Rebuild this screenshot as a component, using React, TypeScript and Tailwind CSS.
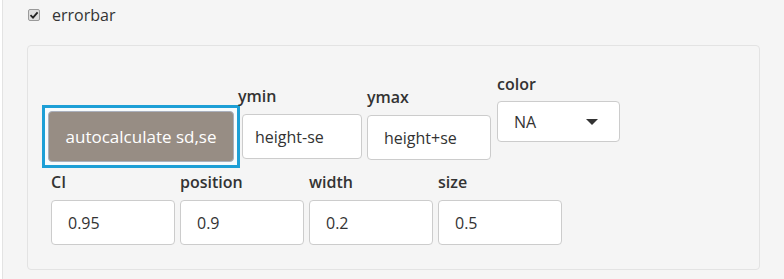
import React from "react";

const font = { fontFamily: '"Open Sans", "Noto Sans", sans-serif' };

const Field: React.FC<{
  label: string;
  value: string;
  width: string;
  pad?: string;
  labelShift?: string;
}> = ({ label, value, width, pad = "pl-4", labelShift = "" }) => (
  <div className="flex flex-col">
    <label
      className={`h-5 text-[16px] leading-5 font-semibold text-[#333] ${labelShift}`}
    >
      {label}
    </label>
    <div
      className={`mt-[8px] h-[45px] ${width} ${pad} flex items-center rounded-[4px] border border-[#cccccc] bg-white text-[16px] text-[#333]`}
    >
      {value}
    </div>
  </div>
);

export default function App() {
  return (
    <div className="h-[279px] w-[784px] overflow-hidden bg-white" style={font}>
      <div className="ml-[2px] h-full border-l border-[#e3e3e3] bg-[#f5f5f5]">
        {/* checkbox row */}
        <div className="flex h-[30px] items-center pl-[25px]">
          <span className="flex h-[12px] w-[12px] items-center justify-center rounded-[2px] border border-[#9a9a9a] bg-[#dedede]">
            <svg width="10" height="10" viewBox="0 0 10 10">
              <path
                d="M1.5 5.2 L4 7.6 L8.6 2.4"
                stroke="#222"
                strokeWidth="1.8"
                fill="none"
              />
            </svg>
          </span>
          <span className="ml-[12px] text-[16px] leading-5 text-[#333]">
            errorbar
          </span>
        </div>

        {/* inner well */}
        <div className="ml-[24px] mt-[15px] h-[225px] w-[733px] rounded-[4px] border border-[#e3e3e3] bg-[#f5f5f5]">
          <div className="flex items-start pl-[14px]">
            <div className="mt-[59px] border-[3px] border-[#1d9fd6] bg-[#f7fbfd] p-[3px]">
              <button className="h-[51px] w-[186px] rounded-[4px] border border-[#aab0bd] bg-[#978d84] text-[17px] text-white">
                autocalculate sd,se
              </button>
            </div>
            <div className="ml-[2px] mt-[40px]">
              <Field
                label="ymin"
                value="height-se"
                width="w-[120px]"
                pad="pl-[12px]"
                labelShift="-ml-[4px]"
              />
            </div>
            <div className="ml-[5px] mt-[41px]">
              <Field label="ymax" value="height+se" width="w-[124px]" />
            </div>
            <div className="ml-[6px] mt-[28px] flex flex-col">
              <label className="h-5 text-[16px] leading-5 font-semibold text-[#333]">
                color
              </label>
              <div className="mt-[7px] flex h-[41px] w-[123px] items-center justify-between rounded-[4px] border border-[#cccccc] bg-white pl-4 pr-[21px] text-[16px] text-[#333]">
                <span>NA</span>
                <svg width="12" height="6" viewBox="0 0 12 6">
                  <path d="M0 0 H12 L6 6 Z" fill="#333" />
                </svg>
              </div>
            </div>
          </div>

          <div className="mt-[4px] flex gap-[5px] pl-[23px]">
            <Field label="CI" value="0.95" width="w-[124px]" />
            <Field label="position" value="0.9" width="w-[124px]" />
            <Field label="width" value="0.2" width="w-[124px]" />
            <Field label="size" value="0.5" width="w-[124px]" />
          </div>
        </div>
      </div>
    </div>
  );
}
